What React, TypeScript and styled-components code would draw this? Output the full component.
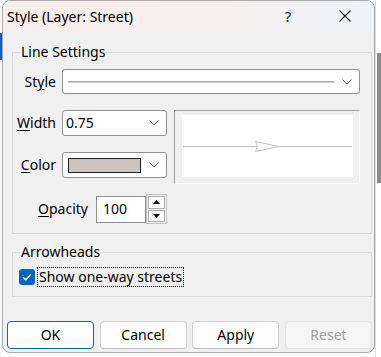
import React from "react";
import styled, { createGlobalStyle } from "styled-components";

const Global = createGlobalStyle`
  html, body { margin: 0; padding: 0; background: #ffffff; }
  body {
    font-family: "Noto Sans", "Open Sans", sans-serif;
    font-size: 14px;
    color: #000;
  }
  #root { width: 381px; height: 357px; overflow: hidden; }
`;

const Screen = styled.div`
  display: flex;
  width: 381px;
  height: 357px;
  background: #ffffff;
`;

const LeftEdge = styled.div`
  flex: none;
  width: 2px;
  background: #f7f7f7;
  display: flex;
  flex-direction: column;
  padding-top: 33px;
`;

const LeftAccent = styled.div`
  height: 27px;
  background: #0b5fc4;
`;

const RightEdge = styled.div`
  flex: none;
  width: 6px;
  display: flex;
  padding-top: 53px;
  box-sizing: border-box;
  border-left: 1px solid #dedede;
`;

const ScrollThumb = styled.div`
  width: 5px;
  height: 130px;
  margin-left: 1px;
  background: #8a8a8a;
`;

const Dialog = styled.div`
  flex: none;
  width: 373px;
  height: 353px;
  box-sizing: border-box;
  border: 1px solid #a9a9a9;
  border-radius: 8px;
  background: #f0f0f0;
  overflow: hidden;
  display: flex;
  flex-direction: column;
`;

const TitleBar = styled.div`
  height: 30px;
  flex: none;
  display: flex;
  align-items: center;
  padding-left: 4px;
  padding-right: 6px;
  background: linear-gradient(90deg, #f6eeeb 0%, #f6efed 55%, #eef2f9 100%);
`;

const TitleText = styled.div`
  flex: 1;
  font-size: 14px;
  line-height: 18px;
  color: #000;
  margin-top: 1px;
`;

const TitleButton = styled.div<{ $w: number; $mr?: number }>`
  width: ${(p) => p.$w}px;
  margin-right: ${(p) => p.$mr ?? 0}px;
  height: 30px;
  display: flex;
  align-items: center;
  justify-content: center;
  font-size: 15px;
  color: #1a1a1a;
`;

const Body = styled.div`
  flex: 1;
  display: flex;
  flex-direction: column;
  padding: 0 2px 0 4px;
`;

const Group = styled.fieldset<{ $mt: number; $pad: string }>`
  margin: ${(p) => p.$mt}px 0 0 5px;
  border: 1px solid #dadada;
  padding: ${(p) => p.$pad};
  min-width: 0;
`;

const GroupTitle = styled.legend`
  margin-left: 7px;
  padding: 0 1px;
  font-size: 14px;
  line-height: 18px;
`;

const Row = styled.div<{ $h: number; $mt?: number; $gap?: number }>`
  display: flex;
  align-items: center;
  height: ${(p) => p.$h}px;
  margin-top: ${(p) => p.$mt ?? 0}px;
  gap: ${(p) => p.$gap ?? 6}px;
`;

const Label = styled.div<{ $w: number }>`
  width: ${(p) => p.$w}px;
  flex: none;
  text-align: right;
  line-height: 18px;
`;

const Key = styled.span`
  text-decoration: underline;
  text-underline-offset: 2px;
`;

const Combo = styled.div<{ $w?: number }>`
  box-sizing: border-box;
  height: 100%;
  ${(p) => (p.$w ? `width: ${p.$w}px; flex: none;` : `flex: 1;`)}
  background: #ffffff;
  border: 1px solid #8f8f8f;
  border-radius: 3px;
  display: flex;
  align-items: center;
  padding: 0 7px 0 3px;
  gap: 8px;
`;

const ComboValue = styled.div`
  flex: 1;
  display: flex;
  align-items: center;
  line-height: 18px;
`;

const LineSample = styled.div`
  flex: 1;
  margin-left: 2px;
  height: 0;
  border-top: 1px solid #a9a9a9;
  border-bottom: 1px solid #cfcfcf;
`;

const Swatch = styled.div`
  width: 73px;
  height: 15px;
  box-sizing: border-box;
  margin-left: 2px;
  background: #cbc4bf;
  border: 1px solid #1e1e1e;
`;

const Lower = styled.div`
  display: flex;
  align-items: flex-start;
  gap: 7px;
  margin-top: 16px;
`;

const LeftCol = styled.div`
  width: 154px;
  flex: none;
  display: flex;
  flex-direction: column;
`;

const Preview = styled.div`
  width: 186px;
  height: 74px;
  box-sizing: border-box;
  border-style: solid;
  border-width: 1px;
  border-color: #a0a0a0 #ffffff #ffffff #a0a0a0;
  padding: 4px 6px 6px 7px;
  display: flex;
`;

const PreviewCanvas = styled.div`
  flex: 1;
  background: #ffffff;
`;

const NumberInput = styled.div`
  width: 50px;
  height: 27px;
  box-sizing: border-box;
  background: #ffffff;
  border: 1px solid #8f8f8f;
  display: flex;
  align-items: center;
  padding-left: 6px;
  line-height: 18px;
`;

const Spinner = styled.div`
  width: 21px;
  height: 30px;
  box-sizing: border-box;
  border: 1px solid #c4c4c4;
  padding: 1px;
  display: flex;
  flex-direction: column;
  gap: 1px;
`;

const SpinButton = styled.div`
  flex: 1;
  box-sizing: border-box;
  background: #fbfbfb;
  border: 1px solid #adadad;
  display: flex;
  align-items: center;
  justify-content: center;
`;

const CheckRow = styled.div`
  display: flex;
  align-items: center;
  height: 20px;
  padding-left: 6px;
  gap: 3px;
`;

const CheckBox = styled.div`
  width: 16px;
  height: 16px;
  box-sizing: border-box;
  border-radius: 3px;
  background: #0067c0;
  display: flex;
  align-items: center;
  justify-content: center;
`;

const CheckLabel = styled.div`
  outline: 1px dotted #000;
  outline-offset: 0;
  padding: 0 1px;
  line-height: 18px;
`;

const ButtonBar = styled.div`
  display: flex;
  justify-content: space-between;
  margin-top: 24px;
`;

const Button = styled.div<{ $primary?: boolean; $disabled?: boolean }>`
  width: 87px;
  height: 28px;
  box-sizing: border-box;
  border-radius: 4px;
  display: flex;
  align-items: center;
  justify-content: center;
  line-height: 18px;
  background: ${(p) => (p.$disabled ? "#f5f5f5" : "#fdfdfd")};
  color: ${(p) => (p.$disabled ? "#9d9d9d" : "#000")};
  border: 1px solid
    ${(p) => (p.$primary ? "#0067c0" : p.$disabled ? "#e3e3e3" : "#d0d0d0")};
  ${(p) =>
    !p.$primary && !p.$disabled ? "border-bottom-color: #bdbdbd;" : ""}
`;

const Chevron = () => (
  <svg width="10" height="6" viewBox="0 0 10 6">
    <path d="M0.5 0.5 L5 5 L9.5 0.5" fill="none" stroke="#5f5f5f" strokeWidth="1" />
  </svg>
);

export default function App() {
  return (
    <>
      <Global />
      <Screen>
        <LeftEdge>
          <LeftAccent />
        </LeftEdge>
        <Dialog>
          <TitleBar>
            <TitleText>Style (Layer: Street)</TitleText>
            <TitleButton $w={46} $mr={11}>?</TitleButton>
            <TitleButton $w={46}>
              <svg width="12" height="12" viewBox="0 0 12 12">
                <path d="M0.5 0.5 L11.5 11.5 M11.5 0.5 L0.5 11.5" stroke="#1a1a1a" strokeWidth="1.1" />
              </svg>
            </TitleButton>
          </TitleBar>
          <Body>
            <Group $mt={12} $pad="8px 11px 9px 0">
              <GroupTitle>Line Settings</GroupTitle>
              <Row $h={25}>
                <Label $w={43}>
                  St<Key>y</Key>le
                </Label>
                <Combo>
                  <ComboValue>
                    <LineSample />
                  </ComboValue>
                  <Chevron />
                </Combo>
              </Row>
              <Lower>
                <LeftCol>
                  <Row $h={26}>
                    <Label $w={43}>
                      <Key>W</Key>idth
                    </Label>
                    <Combo $w={105}>
                      <ComboValue>0.75</ComboValue>
                      <Chevron />
                    </Combo>
                  </Row>
                  <Row $h={26} $mt={16}>
                    <Label $w={43}>
                      <Key>C</Key>olor
                    </Label>
                    <Combo $w={105}>
                      <ComboValue>
                        <Swatch />
                      </ComboValue>
                      <Chevron />
                    </Combo>
                  </Row>
                  <Row $h={30} $mt={16} $gap={8}>
                    <Label $w={75}>
                      <Key>O</Key>pacity
                    </Label>
                    <Row $h={30} $gap={0}>
                      <NumberInput>100</NumberInput>
                      <Spinner>
                        <SpinButton>
                          <svg width="7" height="4" viewBox="0 0 7 4">
                            <path d="M0 4 L3.5 0 L7 4 Z" fill="#000" />
                          </svg>
                        </SpinButton>
                        <SpinButton>
                          <svg width="7" height="4" viewBox="0 0 7 4">
                            <path d="M0 0 L7 0 L3.5 4 Z" fill="#000" />
                          </svg>
                        </SpinButton>
                      </Spinner>
                    </Row>
                  </Row>
                </LeftCol>
                <Preview>
                  <PreviewCanvas>
                    <svg width="170" height="62" viewBox="0 0 170 62">
                      <line x1="1" y1="31.5" x2="170" y2="31.5" stroke="#c9c1bc" strokeWidth="1" />
                      <path
                        d="M73.5 26.5 L97 31.5 L73.5 36.5 L75.5 31.5 Z"
                        fill="#ffffff"
                        stroke="#c9c1bc"
                        strokeWidth="1"
                      />
                    </svg>
                  </PreviewCanvas>
                </Preview>
              </Lower>
            </Group>
            <Group $mt={9} $pad="6px 0 9px 0">
              <GroupTitle>Arrowheads</GroupTitle>
              <CheckRow>
                <CheckBox>
                  <svg width="10" height="8" viewBox="0 0 10 8">
                    <path d="M1 4.2 L3.8 6.8 L9 1.2" fill="none" stroke="#ffffff" strokeWidth="1.3" />
                  </svg>
                </CheckBox>
                <CheckLabel>Show one-way streets</CheckLabel>
              </CheckRow>
            </Group>
            <ButtonBar>
              <Button $primary>OK</Button>
              <Button>Cancel</Button>
              <Button>Apply</Button>
              <Button $disabled>Reset</Button>
            </ButtonBar>
          </Body>
        </Dialog>
        <RightEdge>
          <ScrollThumb />
        </RightEdge>
      </Screen>
    </>
  );
}
